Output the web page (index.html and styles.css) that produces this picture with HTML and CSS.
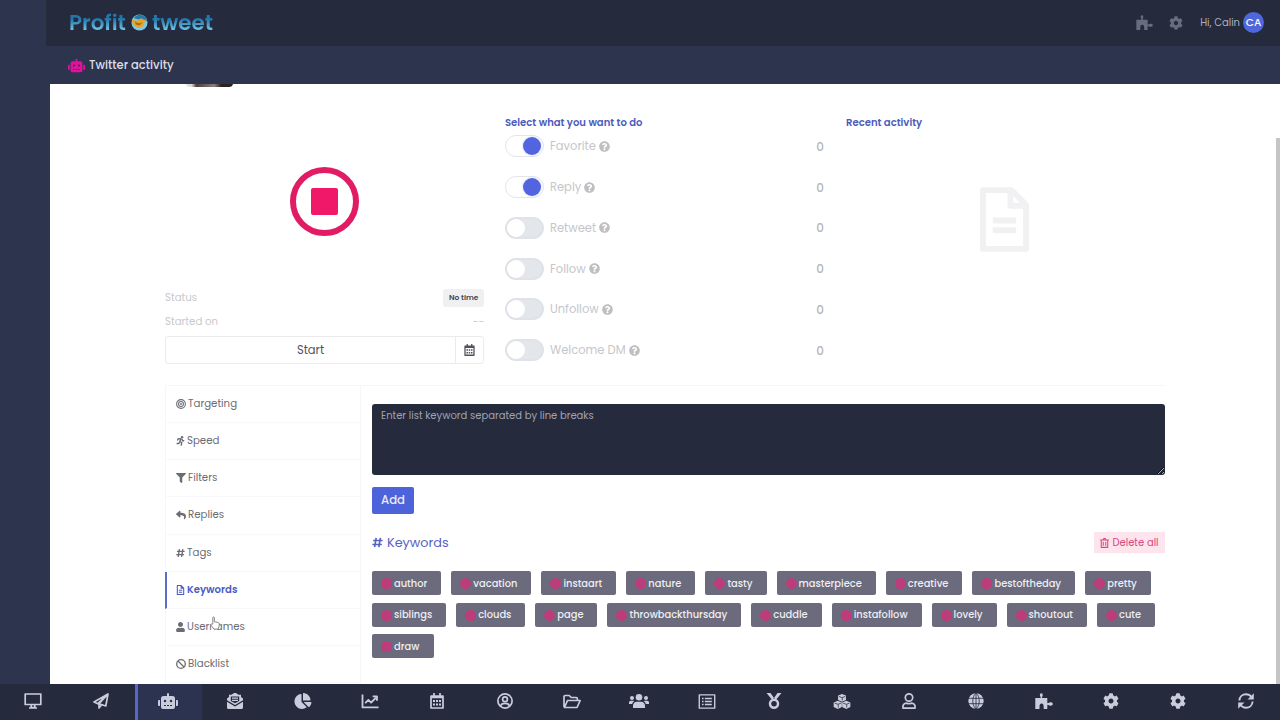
FILE: index.html
```html
<!DOCTYPE html>
<html lang="en">
<head>
    <meta charset="UTF-8">
    <meta name="viewport" content="width=device-width, initial-scale=1.0">
    <title>Twitter activity</title>
    <link rel="stylesheet" href="styles.css">
</head>
<body>
    <!-- Icon set -->
    <svg class="sprite">
        <symbol id="robot" viewBox="0 0 640 512"><path d="M32,224H64V416H32A32,32,0,0,1,0,384V256A32,32,0,0,1,32,224Zm512-48V448a64,64,0,0,1-64,64H160a64,64,0,0,1-64-64V176a80,80,0,0,1,80-80H288V32a32,32,0,0,1,64,0V96H464A80,80,0,0,1,544,176ZM264,256a40,40,0,1,0-40,40A40,40,0,0,0,264,256Zm-8,128H192v32h64Zm96,0H288v32h64ZM456,256a40,40,0,1,0-40,40A40,40,0,0,0,456,256Zm-8,128H384v32h64ZM640,256V384a32,32,0,0,1-32,32H576V224h32A32,32,0,0,1,640,256Z"/></symbol>
        <symbol id="cog" viewBox="0 0 512 512"><path d="M487.4 315.7l-42.6-24.6c4.3-23.2 4.3-47 0-70.2l42.6-24.6c4.9-2.8 7.1-8.6 5.5-14-11.1-35.6-30-67.8-54.7-94.6-3.8-4.1-10-5.1-14.8-2.3L380.8 110c-17.9-15.4-38.5-27.3-60.8-35.1V25.8c0-5.6-3.9-10.5-9.4-11.7-36.7-8.2-74.3-7.8-109.2 0-5.5 1.2-9.4 6.1-9.4 11.7V75c-22.2 7.9-42.8 19.8-60.8 35.1L88.7 85.5c-4.9-2.8-11-1.9-14.8 2.3-24.7 26.7-43.6 58.9-54.7 94.6-1.7 5.4.6 11.2 5.5 14L67.3 221c-4.3 23.2-4.3 47 0 70.2l-42.6 24.6c-4.9 2.8-7.1 8.6-5.5 14 11.1 35.6 30 67.8 54.7 94.6 3.8 4.1 10 5.1 14.8 2.3l42.6-24.6c17.9 15.4 38.5 27.3 60.8 35.1v49.2c0 5.6 3.9 10.5 9.4 11.7 36.7 8.2 74.3 7.8 109.2 0 5.5-1.2 9.4-6.1 9.4-11.7v-49.2c22.2-7.9 42.8-19.8 60.8-35.1l42.6 24.6c4.9 2.8 11 1.9 14.8-2.3 24.7-26.7 43.6-58.9 54.7-94.6 1.5-5.5-.7-11.3-5.6-14.1zM256 336c-44.1 0-80-35.9-80-80s35.9-80 80-80 80 35.9 80 80-35.9 80-80 80z"/></symbol>
        <symbol id="help" viewBox="0 0 512 512"><path d="M504 256c0 136.997-111.043 248-248 248S8 392.997 8 256C8 119.083 119.043 8 256 8s248 111.083 248 248zM262.655 90c-54.497 0-89.255 22.957-116.549 63.758-3.536 5.286-2.353 12.415 2.715 16.258l34.699 26.31c5.205 3.947 12.621 3.008 16.665-2.122 17.864-22.658 30.113-35.797 57.303-35.797 20.429 0 45.698 13.148 45.698 32.958 0 14.976-12.363 22.667-32.534 33.976C247.128 238.528 216 254.941 216 296v4c0 6.627 5.373 12 12 12h56c6.627 0 12-5.373 12-12v-1.333c0-28.462 83.186-29.647 83.186-106.667 0-58.002-60.165-102-116.531-102zM256 338c-25.365 0-46 20.635-46 46 0 25.364 20.635 46 46 46s46-20.636 46-46c0-25.365-20.635-46-46-46z"/></symbol>
        <symbol id="filter" viewBox="0 0 512 512"><path d="M487.976 0H24.028C2.71 0-8.047 25.866 7.058 40.971L192 225.941V432c0 7.831 3.821 15.17 10.237 19.662l80 55.98C298.02 518.69 320 507.493 320 487.98V225.941l184.947-184.97C520.021 25.896 509.338 0 487.976 0z"/></symbol>
        <symbol id="user" viewBox="0 0 448 512"><path d="M224 256c70.7 0 128-57.3 128-128S294.7 0 224 0 96 57.3 96 128s57.3 128 128 128zm89.6 32h-16.7c-22.2 10.2-46.9 16-72.9 16s-50.6-5.8-72.9-16h-16.7C60.2 288 0 348.2 0 422.4V464c0 26.5 21.5 48 48 48h352c26.5 0 48-21.5 48-48v-41.6c0-74.2-60.2-134.4-134.4-134.4z"/></symbol>
        <symbol id="reply" viewBox="0 0 512 512"><path d="M8.309 189.836L184.313 37.851C199.719 24.546 224 35.347 224 56.015v80.053c160.629 1.839 288 34.032 288 186.258 0 61.441-39.581 122.309-83.333 154.132-13.653 9.931-33.111-2.533-28.077-18.631 45.344-145.012-21.507-183.51-176.59-185.742V360c0 20.7-24.3 31.453-39.687 18.164l-176.004-152c-11.071-9.562-11.086-26.753 0-36.328z"/></symbol>
        <symbol id="pie" viewBox="0 0 544 512"><path d="M527.79 288H290.5l158.03 158.03c6.04 6.04 15.98 6.53 22.19.68 38.7-36.46 65.32-85.61 73.13-140.86 1.34-9.46-6.51-17.85-16.06-17.85zm-15.83-64.8C503.72 103.74 408.26 8.28 288.8.04 279.68-.59 272 7.1 272 16.24V240h223.77c9.14 0 16.82-7.68 16.19-16.8zM224 288V50.71c0-9.55-8.39-17.4-17.84-16.06C86.99 51.49-4.1 155.6.14 280.37 4.5 408.51 114.83 513.59 243.03 511.98c50.4-.63 96.97-16.87 135.26-44.03 7.9-5.6 8.42-17.23 1.57-24.08L224 288z"/></symbol>
        <symbol id="puzzle" viewBox="0 0 18 16"><path d="M.3 5h4.900c.5 0 .6-.5.4-1C4.300 2.200 4.900.2 6.300.2s2 2 .8 3.800c-.3.500-.1 1 .4 1h4.800v4.600c0 .6.500.7 1 .4 1.800-1 4.500-.9 4.500 1s-2.700 2-4.500 1c-.5-.3-1-.2-1 .4V16H8.700v-1.500c0-3-.5-4-2.100-4s-2.100 1-2.100 4V16H.3z"/></symbol>
        <symbol id="monitor" viewBox="0 0 18 16"><path class="line" d="M1.200 1h15.600v10.500H1.200zM7.500 11.500L7 14.500h4l-.5-3M5 15h8"/></symbol>
        <symbol id="plane" viewBox="0 0 16 16"><path class="line" d="M15 1L1 9l3.800 1.700L15 1l-2.200 12-6.800-2.300L15 1M6 11v4l2.500-3"/></symbol>
        <symbol id="mail" viewBox="0 0 16 16"><path d="M0 5.500l2-1.500V1.800h2.500L6.700.3a2 2 0 0 1 2.600 0l2.200 1.500H14V4l2 1.500v1.800L8 12 0 7.300zM3.800 3.500v4.400L8 10.300l4.200-2.400V3.500z" fill-rule="evenodd"/><path d="M5 4.500h6v1.200H5zM5 6.700h6v1.200H5zM0 8.700l8 4.700 8-4.700v5.800c0 .8-.7 1.500-1.500 1.500h-13C.7 16 0 15.300 0 14.500z"/></symbol>
        <symbol id="chart" viewBox="0 0 16 14"><path class="line" d="M1 .5v12h15M3.500 8.500l3-3 2.500 2.500 4.500-4.500M10.500 2.200h4v4"/></symbol>
        <symbol id="calendar" viewBox="0 0 14 16"><path class="line" d="M1 3h12v12H1zM4 0v3M10 0v3M1 4.500h12"/><path d="M3 7h2v2H3zM6 7h2v2H6zM9 7h2v2H9zM3 10.500h2v2H3zM6 10.500h2v2H6zM9 10.500h2v2H9z"/></symbol>
        <symbol id="profile" viewBox="0 0 16 16"><circle class="line" cx="8" cy="8" r="7.100"/><circle class="line" cx="8" cy="6.300" r="2.400"/><path class="line" d="M3.500 13c.5-2 2-2.700 4.500-2.700s4 .7 4.500 2.700"/></symbol>
        <symbol id="folder" viewBox="0 0 18 14"><path class="line" d="M1 12.500V2.200C1 1.500 1.500 1 2.200 1h4l2 2h5c.7 0 1.200.5 1.200 1.200V6M1.500 13L4.500 6h12.700L14 13z"/></symbol>
        <symbol id="users" viewBox="0 0 20 14"><circle cx="10" cy="3.300" r="3.300"/><circle cx="3" cy="4" r="2"/><circle cx="17" cy="4" r="2"/><path d="M4 14v-2.200C4 9.400 5.600 7.700 7.800 7.700h4.400c2.200 0 3.800 1.700 3.800 4.100V14zM0 10V8.500C0 7.500.8 6.700 1.800 6.700h2.400c.5 0 .9.200 1.200.5-1.400.7-2 1.700-2.200 2.800zM20 10V8.500c0-1-.8-1.800-1.800-1.800h-2.400c-.5 0-.9.2-1.200.5 1.400.7 2 1.700 2.200 2.800z"/></symbol>
        <symbol id="list" viewBox="0 0 16 14"><path class="line thin" d="M.8.800h14.400v12.400H.8zM6 4.200h6.500M6 7h6.500M6 9.800h6.500M3.300 4.200h1.500M3.300 7h1.500M3.300 9.800h1.500"/></symbol>
        <symbol id="medal" viewBox="0 0 16 16"><path d="M.5 0h4L8 5 6 6.800zM15.500 0h-4L8 5l2 1.800z"/><circle cx="8" cy="10.700" r="4" fill="none" stroke="currentColor" stroke-width="2.500"/></symbol>
        <symbol id="cubes" viewBox="0 0 18 16"><path d="M9 0l4.200 1.700v4.800L9 8.200 4.800 6.500V1.700zM4.500 7.200l4.300 1.800v4.900l-4.300 2-4.400-2V9zM13.500 7.200l4.400 1.800v4.900l-4.400 2-4.300-2V9z"/><path class="cut" d="M5.800 2.600l3.300 1.300 3.300-1.300M9.300 4v3M1.200 9.700l3.500 1.300 3.300-1.300M5 11v3.500M10.200 9.700l3.500 1.300L17 9.700M14 11v3.500"/></symbol>
        <symbol id="person" viewBox="0 0 14 16"><circle class="line" cx="7" cy="4.500" r="3.700"/><path class="line" d="M1 15.200c-.4-3.200.8-5 3.800-5 1.500.6 2.900.6 4.400 0 3 0 4.200 1.800 3.800 5z"/></symbol>
        <symbol id="globe" viewBox="0 0 16 16"><circle cx="8" cy="8" r="7.700"/><path class="cut" d="M0 5.300h16M0 10.700h16M8 0v16M8 0C3.700 3.500 3.700 12.500 8 16c4.300-3.500 4.300-12.500 0-16"/></symbol>
        <symbol id="sync" viewBox="0 0 16 16"><path d="M1.400 7.500C1.600 3.500 4.500 1.300 8 1.300c2.500 0 4.200 1 5.500 2.700M14.600 8.500c-.2 4-3.100 6.200-6.600 6.200-2.500 0-4.200-1-5.500-2.700" fill="none" stroke="currentColor" stroke-width="1.900"/><path d="M15.800.3v6.300H9.500zM.2 15.700V9.400h6.300z"/></symbol>
        <symbol id="target" viewBox="0 0 16 16"><circle class="line" cx="8" cy="8" r="7"/><circle class="line" cx="8" cy="8" r="3.900"/><circle cx="8" cy="8" r="1.500"/></symbol>
        <symbol id="run" viewBox="0 0 14 16"><circle cx="9.500" cy="1.900" r="1.900"/><path d="M2 7.200l1.500-2.700 4 .1L6 8.500l3 2.300-1 4.700M9 5l1.400 2.500H13M5.600 9.700L4.300 12H.8" fill="none" stroke="currentColor" stroke-width="2.200"/></symbol>
        <symbol id="hash" viewBox="0 0 14 14"><path class="line bold" d="M1.500 4.500h12M.5 9.500h12M5.300 1L3.300 13M10.700 1l-2 12"/></symbol>
        <symbol id="file" viewBox="0 0 12 16"><path class="line" d="M.9.900h6.300l3.900 4v10.200H.9zM7 .9V5h4M3.300 8.500h5.400M3.300 11.500h5.400"/></symbol>
        <symbol id="ban" viewBox="0 0 16 16"><circle class="line bold" cx="8" cy="8" r="6.900"/><path class="line bold" d="M3.200 3.200l9.600 9.600"/></symbol>
        <symbol id="trash" viewBox="0 0 14 16"><path class="line" d="M0 3.200h14M4.500 3l1-2h3l1 2M1.800 3.200V15h10.400V3.200M5 6v6.500M9 6v6.500"/></symbol>
    </svg>

    <header class="topbar">
        <div class="logo">
            <span>Profit</span>
            <svg viewBox="0 0 18 18"><circle cx="9" cy="9" r="8.500" fill="#7ccbe9"/><path d="M3 4.500C5 0 12-.5 15.500 3.500l1.500 4L9 6z" fill="#2678aa"/><path d="M.8 5c2.200 1.500 4.700 2.500 6.700 2 1-2.500 4-3 6-1l2.500 0-1.500 2c0 5-4 7.500-8.500 6-3-.9-4.700-3.500-5.200-9z" fill="#e8a428"/><path d="M4 7.500c2 2.500 5 3 8 1-1 3.500-4.500 4.500-7 2z" fill="#a86818"/></svg>
            <span>tweet</span>
        </div>
        <div class="account">
            <svg class="puzzle"><use href="#puzzle"/></svg>
            <svg class="cog"><use href="#cog"/></svg>
            <span class="hello">Hi, Calin</span>
            <span class="initials">CA</span>
        </div>
    </header>
    <div class="subheader">
        <svg><use href="#robot"/></svg>
        <h1>Twitter activity</h1>
    </div>

    <main>
        <div class="photo"></div>
        <div class="scrollbar"></div>
        <section class="overview">
            <div class="state">
                <div class="stop"><span></span></div>
                <div class="info"><span>Status</span><b>No time</b></div>
                <div class="info"><span>Started on</span><span>--</span></div>
                <div class="start">
                    <button>Start</button>
                    <button class="schedule"><svg><use href="#calendar"/></svg></button>
                </div>
            </div>
            <div class="actions">
                <h2>Select what you want to do</h2>
                <div class="action"><i class="switch on"></i><span>Favorite</span><svg><use href="#help"/></svg><b>0</b></div>
                <div class="action"><i class="switch on"></i><span>Reply</span><svg><use href="#help"/></svg><b>0</b></div>
                <div class="action"><i class="switch"></i><span>Retweet</span><svg><use href="#help"/></svg><b>0</b></div>
                <div class="action"><i class="switch"></i><span>Follow</span><svg><use href="#help"/></svg><b>0</b></div>
                <div class="action"><i class="switch"></i><span>Unfollow</span><svg><use href="#help"/></svg><b>0</b></div>
                <div class="action"><i class="switch"></i><span>Welcome DM</span><svg><use href="#help"/></svg><b>0</b></div>
            </div>
            <div class="recent">
                <h2>Recent activity</h2>
                <svg viewBox="0 0 50 66"><path d="M3 3h29l15 15v45H3zM31 3v16h16M13 34h24M13 44h24"/></svg>
            </div>
        </section>

        <section class="settings">
            <nav class="tabs">
                <a><svg><use href="#target"/></svg>Targeting</a>
                <a><svg class="slim"><use href="#run"/></svg>Speed</a>
                <a><svg><use href="#filter"/></svg>Filters</a>
                <a><svg><use href="#reply"/></svg>Replies</a>
                <a><svg class="slim"><use href="#hash"/></svg>Tags</a>
                <a class="active"><svg class="slim"><use href="#file"/></svg>Keywords</a>
                <a><svg class="slim"><use href="#user"/></svg>Usernames</a>
                <a><svg><use href="#ban"/></svg>Blacklist</a>
                <svg class="cursor" viewBox="0 0 12 16"><path d="M3.500 9V2c0-1.300 1.800-1.300 1.800 0v4.500l4.500 1c.9.200 1.200.8 1.200 1.500l-.5 3.500-1.200 2.500H5L1.200 10.500c-.7-1.200.8-1.800 1.500-1z"/></svg>
            </nav>
            <div class="keywords">
                <textarea placeholder="Enter list keyword separated by line breaks"></textarea>
                <button class="add">Add</button>
                <div class="list-head">
                    <h3><svg><use href="#hash"/></svg>Keywords</h3>
                    <button class="delete"><svg><use href="#trash"/></svg>Delete all</button>
                </div>
                <div class="tags first">
                    <span>author</span><span>vacation</span><span>instaart</span><span>nature</span><span>tasty</span><span>masterpiece</span><span>creative</span><span>bestoftheday</span><span>pretty</span>
                </div>
                <div class="tags second">
                    <span>siblings</span><span>clouds</span><span>page</span><span>throwbackthursday</span><span>cuddle</span><span>instafollow</span><span>lovely</span><span>shoutout</span><span>cute</span>
                </div>
                <div class="tags third">
                    <span>draw</span>
                </div>
            </div>
        </section>
    </main>

    <footer>
        <a><svg><use href="#monitor"/></svg></a>
        <a><svg><use href="#plane"/></svg></a>
        <a class="active"><svg class="wide"><use href="#robot"/></svg></a>
        <a><svg><use href="#mail"/></svg></a>
        <a><svg><use href="#pie"/></svg></a>
        <a><svg class="short"><use href="#chart"/></svg></a>
        <a><svg><use href="#calendar"/></svg></a>
        <a><svg><use href="#profile"/></svg></a>
        <a><svg class="short"><use href="#folder"/></svg></a>
        <a><svg class="wide"><use href="#users"/></svg></a>
        <a><svg class="short"><use href="#list"/></svg></a>
        <a><svg><use href="#medal"/></svg></a>
        <a><svg class="short"><use href="#cubes"/></svg></a>
        <a><svg><use href="#person"/></svg></a>
        <a><svg><use href="#globe"/></svg></a>
        <a><svg><use href="#puzzle"/></svg></a>
        <a><svg><use href="#cog"/></svg></a>
        <a><svg><use href="#cog"/></svg></a>
        <a><svg><use href="#sync"/></svg></a>
    </footer>
</body>
</html>
```
FILE: styles.css
```css
* {
    box-sizing: border-box;
}
body {
    margin: 0;
    height: 720px;
    overflow: hidden;
    display: flex;
    flex-direction: column;
    background-color: #2c344e;
    font-family: Poppins, Inter, sans-serif;
    font-size: 10.2px;
    color: #5d5e66;
}
h1, h2, h3 {
    margin: 0;
    font-weight: 500;
}
button {
    font-family: inherit;
    padding: 0;
    border: none;
}
svg {
    fill: currentColor;
    flex-shrink: 0;
}
.sprite {
    display: none;
}
.line {
    fill: none;
    stroke: currentColor;
    stroke-width: 1.7;
    stroke-linejoin: round;
}
.thin {
    stroke-width: 1.3;
}
.bold {
    stroke-width: 2.1;
}
.cut {
    fill: none;
    stroke: #252a3c;
    stroke-width: 0.8;
}

/* Header */
.topbar {
    height: 46px;
    margin-left: 46px;
    padding: 0 16px 1px 23px;
    display: flex;
    justify-content: space-between;
    align-items: center;
    background-color: #252a3c;
}
.logo {
    display: flex;
    align-items: center;
    gap: 4px;
    font-size: 21.4px;
    font-weight: 600;
    line-height: 26px;
}
.logo span {
    background-image: linear-gradient(#2276ab 35%, #6dc2e6 75%);
    -webkit-background-clip: text;
    background-clip: text;
    color: transparent;
}
.logo svg {
    width: 17px;
    height: 17px;
    margin-left: 1px;
}
.account {
    display: flex;
    align-items: center;
    color: #686d7e;
}
.account .puzzle {
    width: 17px;
    height: 15px;
    margin-right: 16px;
}
.account .cog {
    width: 14px;
    height: 14px;
    margin-right: 17px;
}
.hello {
    margin-right: 3px;
    color: #adb0bc;
    font-size: 10px;
}
.initials {
    width: 21px;
    height: 21px;
    border-radius: 50%;
    background-color: #5066dc;
    color: #fff;
    font-size: 10.5px;
    font-weight: 500;
    line-height: 21px;
    text-align: center;
}
.subheader {
    height: 38px;
    padding-left: 68px;
    display: flex;
    align-items: center;
    gap: 4px;
}
.subheader svg {
    width: 17px;
    height: 15px;
    color: #e0119d;
}
.subheader h1 {
    font-size: 11.5px;
    color: #dcdee5;
}

/* Content */
main {
    position: relative;
    height: 600px;
    margin-left: 50px;
    padding: 30px 115px 0;
    background-color: #fff;
    overflow: hidden;
}
.photo {
    position: absolute;
    top: -18px;
    left: 136px;
    width: 47px;
    height: 21px;
    border-radius: 0 0 4px 4px;
    background-image: linear-gradient(90deg, #ddd 12%, #4a4040 22%, #8d7e78 60%, #2b2224 75%);
}
.scrollbar {
    position: absolute;
    top: 54px;
    right: 0;
    width: 4px;
    height: 546px;
    background-color: #c5c5c5;
}
.overview {
    height: 271px;
    display: grid;
    grid-template-columns: 319px 319px 320px;
    gap: 21px;
}
.overview h2 {
    height: 17px;
    font-size: 10.05px;
    font-weight: 600;
    line-height: 17px;
    color: #4a5cbd;
}
.state {
    display: flex;
    flex-direction: column;
}
.stop {
    width: 69px;
    height: 69px;
    margin: 53px 125px 50px;
    display: flex;
    justify-content: center;
    align-items: center;
    border: 6px solid #e21c64;
    border-radius: 50%;
}
.stop span {
    width: 27px;
    height: 27px;
    border-radius: 2px;
    background-color: #f01868;
}
.info {
    height: 24px;
    display: flex;
    justify-content: space-between;
    align-items: center;
    color: #c9c9cd;
}
.info b {
    height: 18px;
    padding: 0 5.5px;
    border-radius: 3px;
    background-color: #f0f0f3;
    color: #45464f;
    font-size: 7.5px;
    font-weight: 600;
    line-height: 18px;
}
.start {
    height: 28px;
    margin-top: 2px;
    display: flex;
    border: 1px solid #ebebee;
    border-radius: 3px;
}
.start button {
    flex: 1;
    background-color: transparent;
    color: #50525b;
    font-size: 11.5px;
}
.start .schedule {
    flex: 0 0 28px;
    border-left: 1px solid #ebebee;
}
.schedule svg {
    width: 11px;
    height: 12px;
    vertical-align: middle;
}
.action {
    height: 40.75px;
    display: flex;
    align-items: center;
    color: #c6c6ca;
    font-size: 11.5px;
}
.action:nth-child(2) {
    margin-top: -5px;
}
.action span {
    margin: 0 3px 0 6px;
    padding-top: 1px;
}
.action svg {
    width: 11px;
    height: 11px;
    color: #bfbfc2;
}
.action b {
    margin-left: auto;
    padding-top: 1px;
    color: #b5b5ba;
    font-size: 12px;
    font-weight: 500;
}
.switch {
    width: 39px;
    height: 22px;
    display: flex;
    align-items: center;
    border: 2px solid #e0e2e8;
    border-radius: 11px;
    background-color: #e3e6eb;
}
.switch::before {
    content: '';
    width: 18px;
    height: 18px;
    border-radius: 50%;
    background-color: #fff;
}
.switch.on {
    border: 1px solid #e4e5ec;
    background-color: #fff;
}
.switch.on::before {
    margin-left: 17px;
    background-color: #5265df;
    box-shadow: 0 0 3px #cbd7ff;
}
.recent {
    padding-left: 1px;
}
.recent svg {
    width: 49px;
    height: 65px;
    margin: 56px 0 0 134px;
    fill: none;
    stroke: #f1f1f4;
    stroke-width: 6;
    stroke-linejoin: round;
}

/* Settings */
.settings {
    display: flex;
    border-top: 1px solid #f6f6f8;
}
.tabs {
    position: relative;
    width: 196px;
    border: solid #f6f6f8;
    border-width: 0 1px;
}
.tabs a {
    height: 37.15px;
    padding-left: 10px;
    display: flex;
    align-items: center;
    gap: 2px;
    border-bottom: 1px solid #f8f8fa;
    color: #6b6c74;
    font-size: 10.2px;
}
.tabs a svg {
    width: 10px;
    height: 10px;
}
.tabs a .slim {
    width: 9px;
}
.tabs .active {
    margin-left: -1px;
    padding-left: 9px;
    border-left: 2px solid #5c6ccb;
    color: #4a5bc4;
    font-size: 10.1px;
    font-weight: 600;
}
.tabs .cursor {
    position: absolute;
    top: 230px;
    left: 43px;
    width: 12px;
    height: 14px;
    fill: #fff;
    stroke: #777;
    stroke-width: 1;
}
.keywords {
    width: 793px;
    margin-left: 11px;
    padding-top: 18px;
}
textarea {
    display: block;
    width: 793px;
    height: 71px;
    padding: 4px 9px;
    border: none;
    border-radius: 3px;
    background-color: #252a3c;
    font-family: inherit;
    font-size: 10px;
}
textarea::placeholder {
    color: #a0a3b0;
}
.add {
    width: 42px;
    height: 27px;
    margin-top: 12px;
    display: block;
    border-radius: 2px;
    background-color: #4d63d9;
    color: #e9ecff;
    font-size: 11.7px;
    font-weight: 500;
}
.list-head {
    height: 21px;
    margin: 18px 0;
    display: flex;
    justify-content: space-between;
    align-items: center;
}
.list-head h3 {
    display: flex;
    align-items: center;
    gap: 4px;
    color: #5563c2;
    font-size: 12.8px;
    font-weight: 400;
}
.list-head h3 svg {
    width: 11px;
    height: 11px;
}
.delete {
    width: 71px;
    height: 21px;
    display: flex;
    justify-content: center;
    align-items: center;
    gap: 3px;
    background-color: #fde4ed;
    color: #d84a80;
    font-size: 10px;
}
.delete svg {
    width: 9px;
    height: 10px;
}
.tags {
    margin-bottom: 7.5px;
    display: flex;
    gap: 10px;
}
.tags.first {
    width: 779px;
}
.tags.second {
    width: 783px;
}
.tags.third {
    width: 62px;
}
.tags span {
    flex: 1 0 auto;
    height: 24px;
    padding: 1px 13px 0 9px;
    display: flex;
    align-items: center;
    gap: 2px;
    border-radius: 2px;
    background-color: #6b6b7d;
    color: #eeeef3;
    font-size: 9.9px;
    font-weight: 500;
}
.tags span::before {
    content: '';
    width: 11px;
    height: 11px;
    border-radius: 50%;
    background-color: #bd3d7b;
}

/* Bottom navigation */
footer {
    height: 36px;
    display: grid;
    grid-template-columns: repeat(19, 1fr);
    background-color: #252a3c;
    color: #c9cddb;
}
footer a {
    display: flex;
    justify-content: center;
    align-items: center;
    padding: 0 1px 2px 0;
}
footer .active {
    background-color: #2b3350;
    box-shadow: inset 3px 0 #5a66cf;
}
footer svg {
    width: 18px;
    height: 16px;
}
footer .wide {
    width: 20px;
}
footer .short {
    height: 15px;
}
```
